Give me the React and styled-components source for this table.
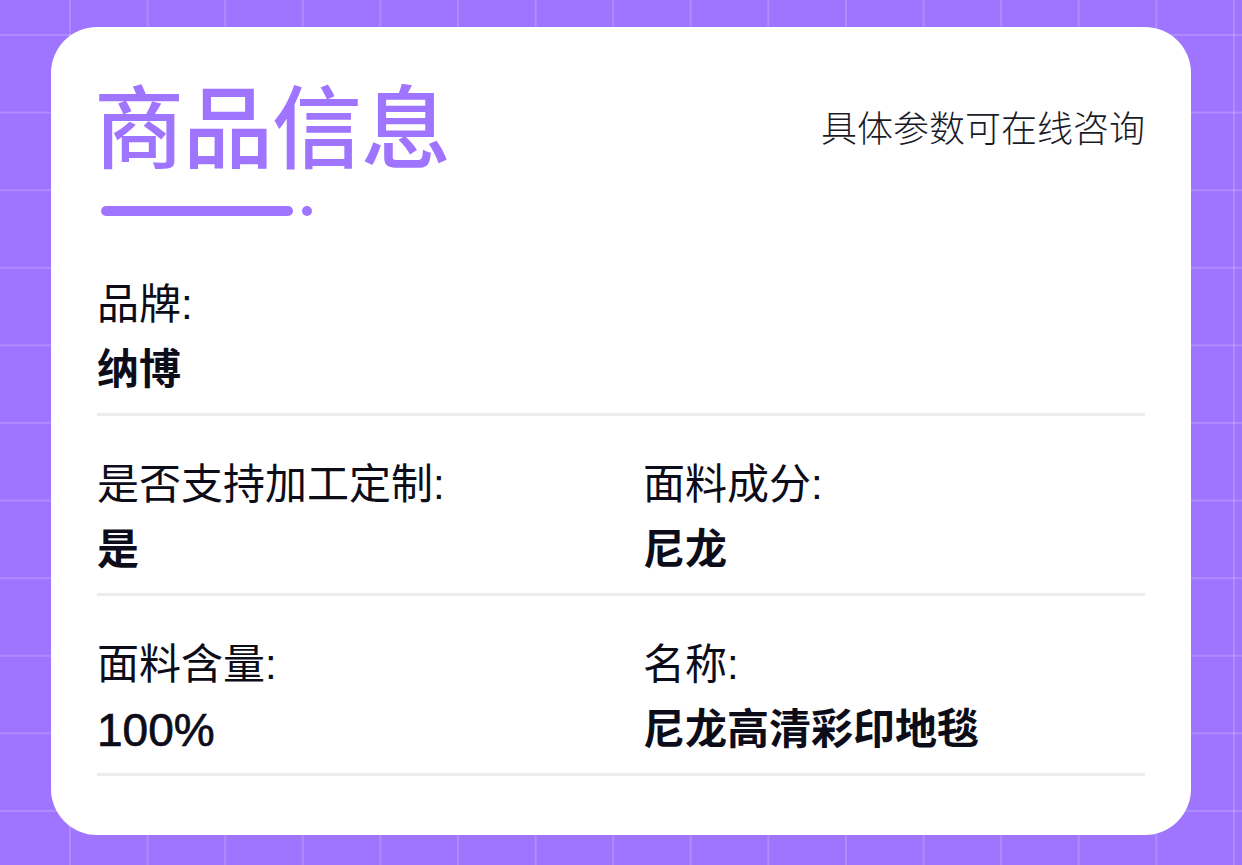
import React from 'react'
import styled, { createGlobalStyle } from 'styled-components'

const GlobalStyle = createGlobalStyle`
    html, body {
        margin: 0;
        padding: 0;
    }
    body {
        font-family: 'Liberation Sans', 'Noto Sans CJK SC', sans-serif;
        color: #0d0d1a;
    }
    * {
        box-sizing: border-box;
    }
`

const Page = styled.main`
    width: 1242px;
    height: 865px;
    padding: 27px 51px 30px;
    background-color: #9f75ff;
    background-image: linear-gradient(to right, rgba(255, 255, 255, 0.16) 0 2px, transparent 2px),
        linear-gradient(to bottom, rgba(255, 255, 255, 0.16) 0 2px, transparent 2px);
    background-size: 77.6px 77.6px;
    background-position: 69px 34px;
`
const Card = styled.section`
    height: 100%;
    background: #fff;
    border-radius: 46px;
    padding: 58px 46px 0;
`
const Head = styled.header`
    display: flex;
    justify-content: space-between;
    align-items: center;
`
const Title = styled.h1`
    margin: 0 0 0 -3px;
    font-size: 90px;
    line-height: 90px;
    font-weight: 500;
    color: #9f75ff;
    letter-spacing: -1px;
`
const Hint = styled.span`
    font-size: 36px;
    line-height: 36px;
    font-weight: 300;
    color: #1b1b28;
`
const Underline = styled.div`
    display: flex;
    align-items: center;
    gap: 9px;
    margin: 31px 0 20px 4px;
`
const Bar = styled.span`
    width: ${props => props.width}px;
    height: 10px;
    border-radius: 5px;
    background: #9f75ff;
`
const Row = styled.div`
    display: grid;
    grid-template-columns: ${props => (props.cols === 2 ? '1fr 1fr' : '1fr')};
    column-gap: 44px;
    padding: 48px 0 22px;
    border-bottom: 3px solid #ececee;
`
const Field = styled.div`
    display: flex;
    flex-direction: column;
    gap: 23px;
`
const Label = styled.span`
    font-size: 42px;
    line-height: 42px;
    font-weight: 400;
`
const Value = styled.span`
    font-size: ${props => (props.numeric ? 46 : 42)}px;
    line-height: 42px;
    font-weight: ${props => (props.numeric ? 400 : 700)};
    -webkit-text-stroke: ${props => (props.numeric ? '0.7px #0d0d1a' : '0')};
`

const rows = [
    [{ label: '品牌', value: '纳博' }],
    [
        { label: '是否支持加工定制', value: '是' },
        { label: '面料成分', value: '尼龙' },
    ],
    [
        { label: '面料含量', value: '100%', numeric: true },
        { label: '名称', value: '尼龙高清彩印地毯' },
    ],
]

export default function App() {
    return (
        <>
            <GlobalStyle />
            <Page>
                <Card>
                    <Head>
                        <Title>商品信息</Title>
                        <Hint>具体参数可在线咨询</Hint>
                    </Head>
                    <Underline>
                        <Bar width={192} />
                        <Bar width={10} />
                    </Underline>
                    {rows.map((row, i) => (
                        <Row key={i} cols={i === 0 ? 1 : 2}>
                            {row.map(f => (
                                <Field key={f.label}>
                                    <Label>{f.label}:</Label>
                                    <Value numeric={f.numeric}>{f.value}</Value>
                                </Field>
                            ))}
                        </Row>
                    ))}
                </Card>
            </Page>
        </>
    )
}
